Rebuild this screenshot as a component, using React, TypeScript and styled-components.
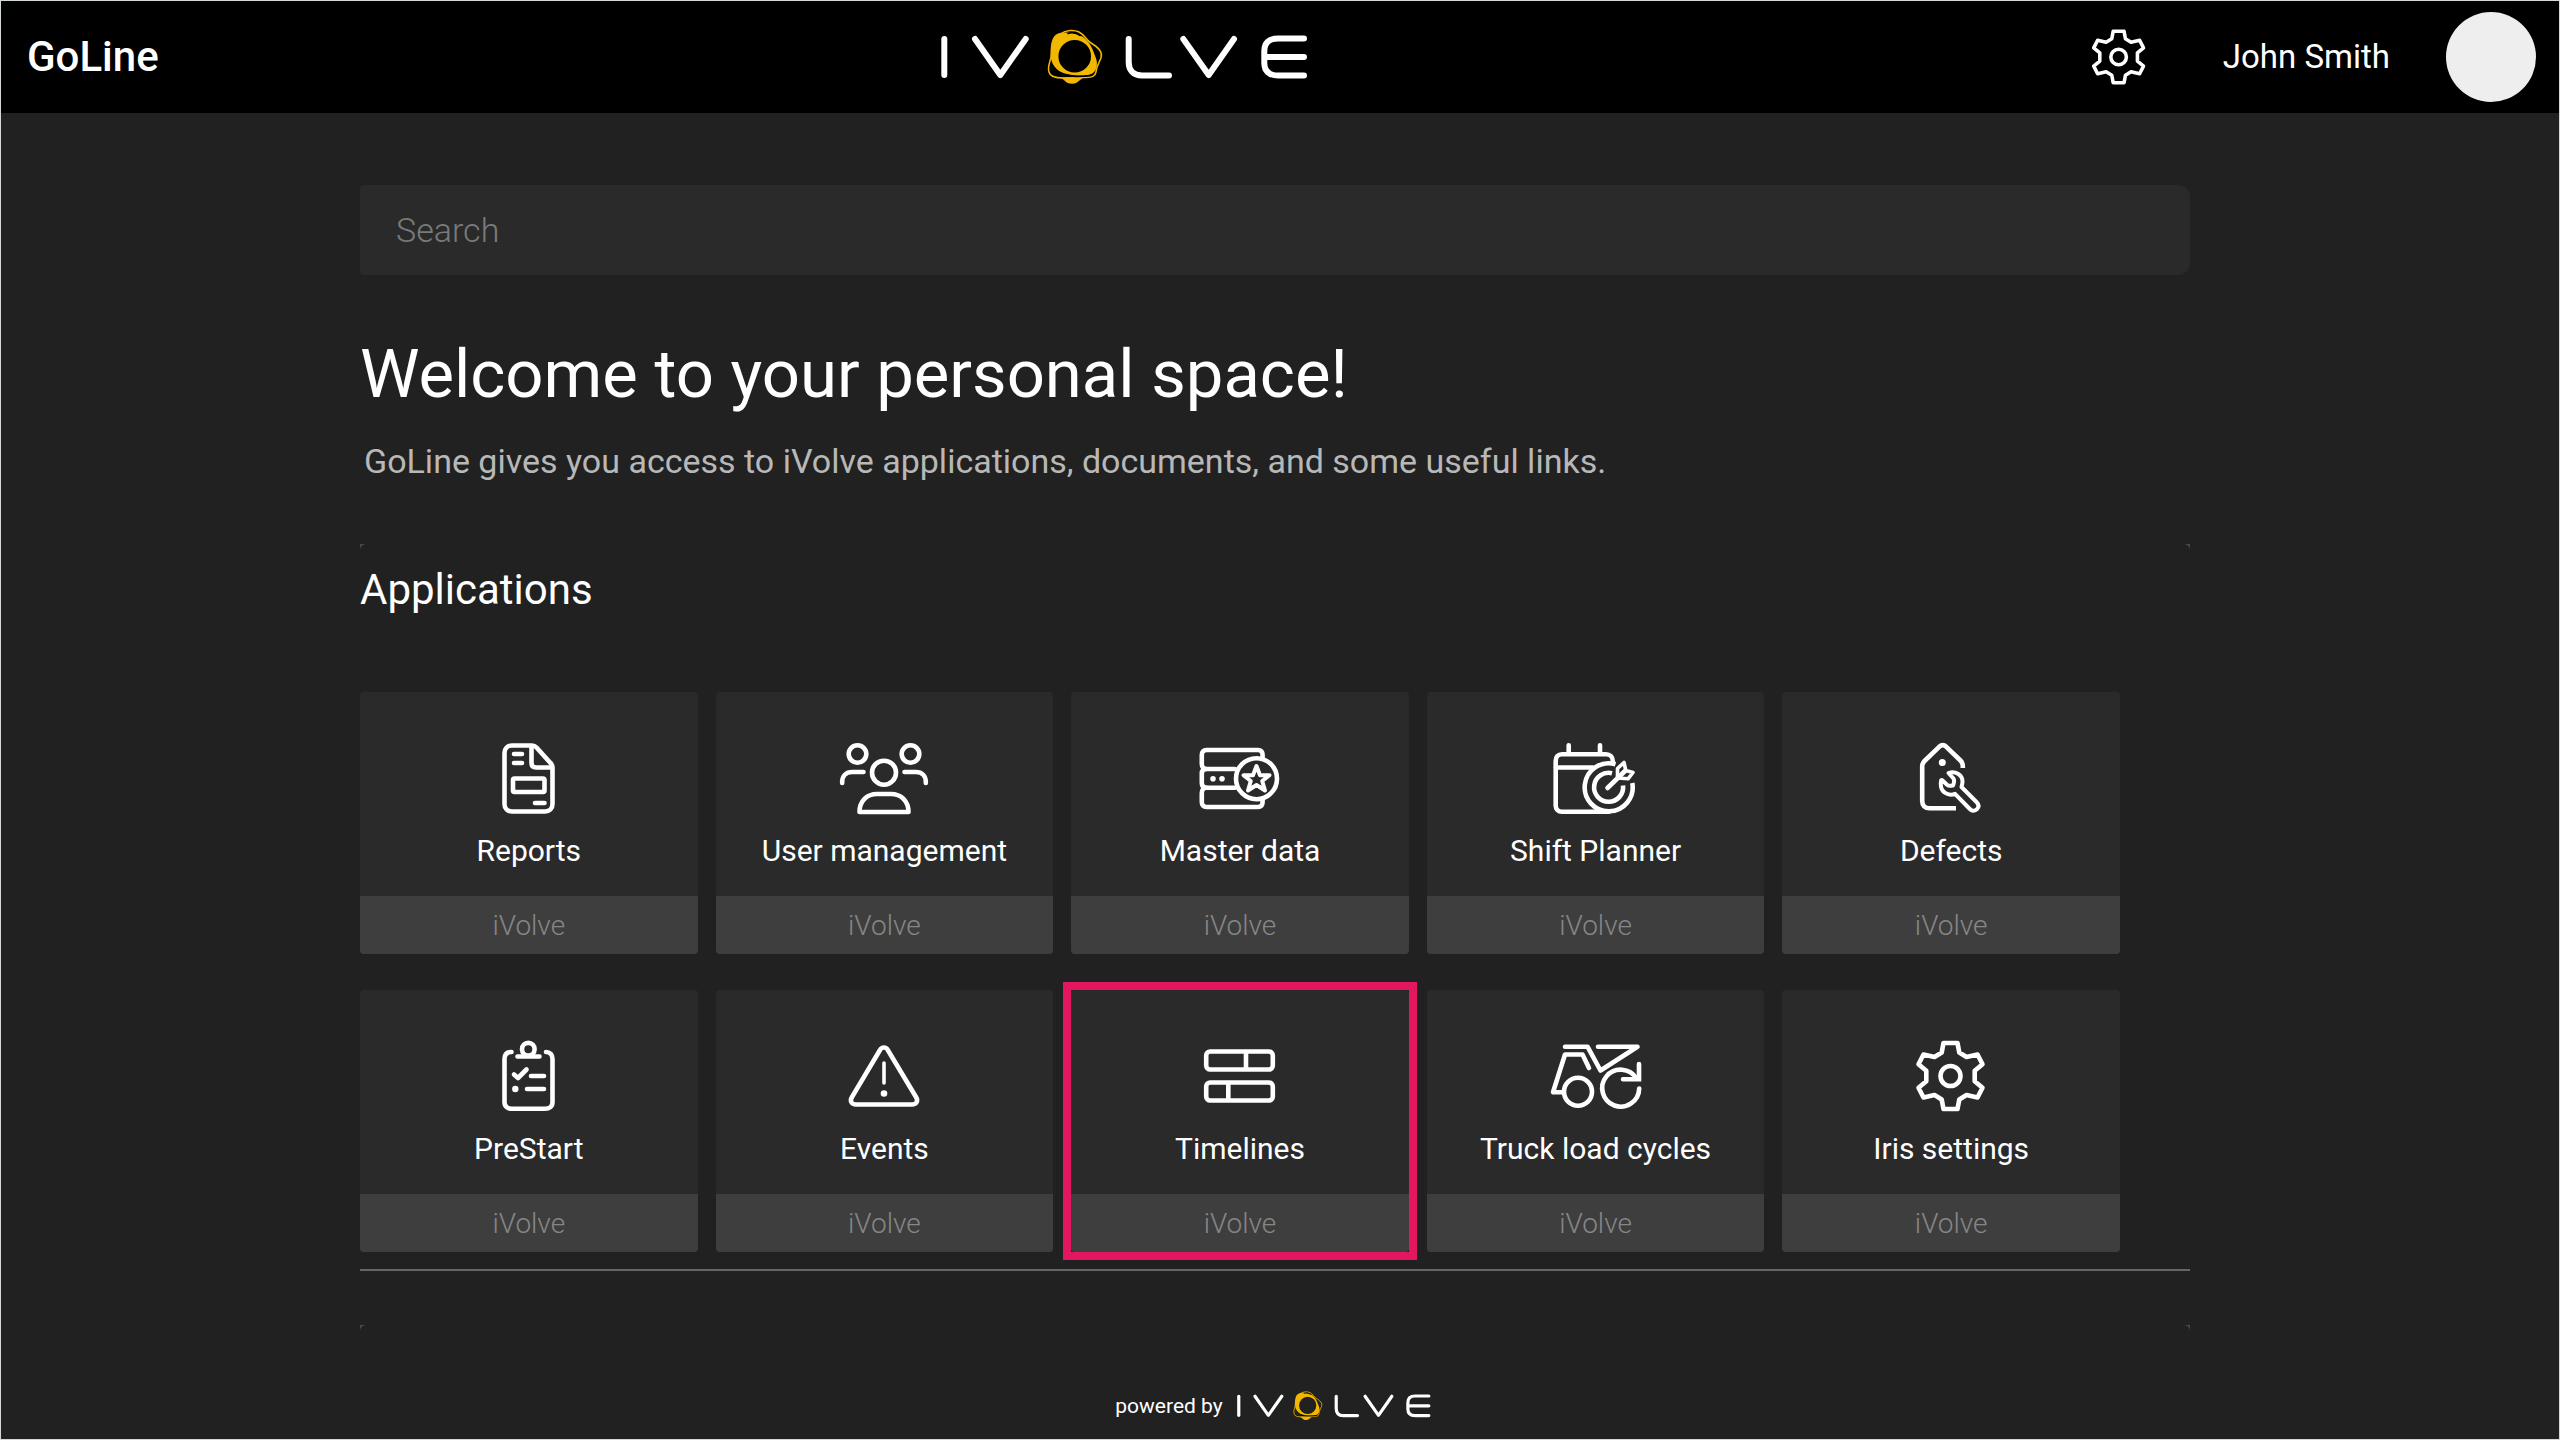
import React from "react";
import styled, { createGlobalStyle } from "styled-components";

const GlobalStyle = createGlobalStyle`
  *, *::before, *::after { box-sizing: border-box; }
  body {
    margin: 0;
    background: #212121;
    color: #fff;
    font-family: Roboto, "Open Sans", "Liberation Sans", sans-serif;
  }
  h1, h2, p { margin: 0; font-weight: 400; }
  button { font: inherit; color: inherit; border: 0; padding: 0; background: none; cursor: pointer; }
  svg { display: block; }
`;

const Page = styled.div`
  display: flex;
  flex-direction: column;
  min-height: 100vh;
  border: 1px solid #d3d8da;
`;

const Header = styled.header`
  display: flex;
  align-items: center;
  justify-content: space-between;
  height: 112px;
  padding: 0 23px 0 26px;
  background: #000;
`;

const Brand = styled.a`
  color: #fff;
  font-size: 42px;
  font-weight: 500;
  line-height: 56px;
  text-decoration: none;
`;

const UserArea = styled.div`
  display: flex;
  align-items: center;
  gap: 56px;
`;

const GearButton = styled.button`
  margin-right: 20px;
`;

const UserName = styled.span`
  font-size: 33px;
  line-height: 48px;
`;

const Avatar = styled.button`
  && {
    width: 90px;
    height: 90px;
    border-radius: 50%;
    background: #eee;
  }
`;

const Main = styled.main`
  flex: 1;
  width: 100%;
  padding: 72px 10px 0 0;
`;

const Content = styled.div`
  width: 100%;
  max-width: 1830px;
  margin: 0 auto;
`;

const SearchInput = styled.input`
  display: block;
  width: 100%;
  height: 90px;
  padding: 0 36px;
  border: 0;
  border-radius: 4px 12px 12px 4px;
  background: #2a2a2a;
  color: #fff;
  font-family: inherit;
  font-size: 34px;
  font-weight: 300;
  outline: none;
  &::placeholder { color: #7a7a7a; opacity: 1; }
`;

const Title = styled.h1`
  margin-top: 53px;
  font-size: 67px;
  line-height: 92px;
`;

const Subtitle = styled.p`
  margin-top: 17px;
  padding-left: 4px;
  color: #b8b8b8;
  font-size: 34px;
  line-height: 48px;
`;

const Section = styled.section`
  background: #4a4a4a;
  margin-top: 59px;
  & + & { margin-top: 54px; }
`;

const SectionBody = styled.div`
  min-height: 40px;
  border-radius: 6px 6px 0 0;
  background: #212121;
`;

const SectionTitle = styled.h2`
  padding-top: 18px;
  font-size: 42px;
  line-height: 56px;
`;

const CardGrid = styled.div`
  display: grid;
  grid-template-columns: repeat(5, 1fr);
  gap: 36px 18px;
  margin-top: 74px;
  padding: 0 70px 17px 0;
`;

const Divider = styled.hr`
  height: 2px;
  margin: 0;
  border: 0;
  background: #666;
`;

const Card = styled.button<{ $highlighted?: boolean }>`
  position: relative;
  display: flex;
  flex-direction: column;
  align-items: stretch;
  && { border-radius: 4px; background: #2a2a2a; }
  ${(p) =>
    p.$highlighted &&
    `&::after {
      content: "";
      position: absolute;
      inset: -8px;
      border: 8px solid #e21760;
    }`}
`;

const CardFace = styled.span`
  display: flex;
  flex-direction: column;
  align-items: center;
  height: 204px;
  padding-top: 38px;
`;

const CardLabel = styled.span`
  font-size: 30px;
  line-height: 50px;
`;

const CardVendor = styled.span`
  height: 58px;
  border-radius: 0 0 4px 4px;
  background: #3e3e3e;
  color: #868686;
  font-size: 28px;
  font-weight: 300;
  line-height: 60px;
  text-align: center;
`;

const Footer = styled.footer`
  display: flex;
  align-items: center;
  justify-content: center;
  gap: 14px;
  height: 66px;
  padding-right: 14px;
  font-size: 21px;
  line-height: 32px;
`;

const GEAR =
  "M40.5 15H54.5L56.3 24.5L63.5 29L74.5 26.5L79.5 36.2L71.7 42.7V53.3L79.5 59.8L74.5 69.5L63.5 67L56.3 71.5L54.5 81H40.5L38.7 71.5L31.5 67L20.5 69.5L15.5 59.8L23.3 53.3V42.7L15.5 36.2L20.5 26.5L31.5 29L38.7 24.5Z";

const Gear = () => (
  <>
    <path d={GEAR} />
    <circle cx="47.5" cy="48" r="10" />
  </>
);

const Icon = ({ children, size = 96, box = "0 0 96 96" }: { children: React.ReactNode; size?: number; box?: string }) => (
  <svg width={size} height={size} viewBox={box} fill="none" stroke="#fff" strokeWidth="4.6" strokeLinecap="round" strokeLinejoin="round" aria-hidden="true">
    {children}
  </svg>
);

const Logo = ({ width }: { width: number }) => (
  <svg width={width} viewBox="0 0 367 56" fill="none" stroke="#fff" strokeWidth="6" strokeLinecap="round" strokeLinejoin="round" role="img" aria-label="iVolve">
    <path d="M3.3 10V46" />
    <path d="M34 10L59.3 46L84.7 10" />
    <path d="M187.7 10V33C187.7 41 192 46.5 201 46.5H228" />
    <path d="M242.3 10L267.7 46L293 10" />
    <path d="M363 9.5H337C328 9.5 323.3 14 323.3 22V34C323.3 42 328 46.5 337 46.5H363M324 28H363" />
    <g stroke="none" fill="#f2b800">
      <path fillRule="evenodd" d="M109.5 26C109.5 16 110.5 7 117 4.500C123 3 133 2.500 142 8C149 13 152 20 155.500 31C157 38 154.500 44 149 45.500C141 47.500 127 46.500 120 43C113 39 110 33 109.500 26ZM117.400 27.300A16.300 16.300 0 1 0 150 27.300A16.300 16.300 0 1 0 117.400 27.300Z" />
      <path d="M119 48.500C124 50.500 124 54.700 131 54.700C138 54.700 138 50 144 48Z" />
    </g>
    <path strokeWidth="1.500" stroke="#f2b800" d="M119 5C125 1 133 0.500 138 3C144 6 145 11 150 14C157 18 162 23 160 29C158 34 155.500 37 155 43C154 48 151 48 144 48.500L122 49C115 49 109 48 108 43C106 37 110 32 110.500 25" />
    <path strokeWidth="1.500" stroke="#000" d="M127 4.500C131 3.200 136 4.200 139 6.500M121 45.800C129 48 140 47.800 150 46.500" />
  </svg>
);

const APPS: { name: string; highlighted?: boolean; icon: React.ReactNode }[] = [
  {
    name: "Reports",
    icon: (
      <>
        <path d="M51 15.500H31C26.500 15.500 23.500 18.500 23.500 23V74C23.500 78.500 26.500 81.500 31 81.500H64C68.500 81.500 71.500 78.500 71.500 74V38C71.500 36 71 34.500 69.500 33L55.500 17.500C54.300 16.200 52.800 15.500 51 15.500Z" />
        <path d="M50.500 16V33C50.500 36 52 37.500 55 37.500H71" />
        <path d="M33 24H41M33 33H41M54 73H63.500" />
        <rect x="32" y="48.500" width="31.500" height="13.500" rx="1.500" />
      </>
    ),
  },
  {
    name: "User management",
    icon: (
      <>
        <circle cx="21.500" cy="24" r="8.800" />
        <circle cx="74.500" cy="24" r="8.800" />
        <circle cx="48" cy="42.700" r="12" />
        <path d="M23.500 82C23.500 71 31 64 41 64H55C65 64 72.500 71 72.500 82Z" />
        <path d="M6.200 53V52C6.200 46 10 42 16 42H27.500M68.500 42H80C86 42 89.800 46 89.800 52V53" />
      </>
    ),
  },
  {
    name: "Master data",
    icon: (
      <>
        <path d="M43 39H14.500C11.500 39 9.800 37 9.800 34V25C9.800 22 11.500 20 14.500 20H66C69 20 70.600 22 70.600 25V27" />
        <path d="M43 57.700H14.500C11.500 57.700 9.800 56 9.800 53V43.500C9.800 40.500 11.500 39 14.500 39" />
        <path d="M14.500 57.700C11.500 57.700 9.800 60 9.800 63V72C9.800 75 11.500 77 14.500 77H66C69 77 70.600 75 70.600 72V70" />
        <circle cx="64.500" cy="48.700" r="20.500" />
        <path strokeWidth="4" d="M64.500 36L68 45.200H77.500L70.200 51L73 60.500L64.500 55L56 60.500L58.800 51L51.500 45.200H61Z" />
        <g fill="#fff" stroke="none">
          <circle cx="21" cy="48.700" r="2.800" />
          <circle cx="30" cy="48.700" r="2.800" />
        </g>
      </>
    ),
  },
  {
    name: "Shift Planner",
    icon: (
      <>
        <path d="M61 81.800H14C10 81.800 7.700 79 7.700 75.500V31C7.700 27 10 24.300 14 24.300H58C62 24.300 64.800 27 64.800 31V32" />
        <path d="M8 37.500H45M20.700 15.200V23M52 15.200V23" />
        <path strokeLinecap="butt" d="M67.500 34.300A24 24 0 1 0 84.300 53" />
        <path strokeLinecap="butt" d="M64 43.200A14.500 14.500 0 1 0 75 55.500" />
        <path d="M59.500 58L77 41" />
        <path strokeWidth="3.600" d="M69.500 48V38.500L76 32.500L77.800 40.500L85 42.500L80 48.800Z" />
      </>
    ),
  },
  {
    name: "Defects",
    icon: (
      <>
        <path strokeLinecap="butt" d="M59.800 38V36C59.800 33.500 59 32 57.500 30.500L43.300 16.800C41 14.700 38.500 14.700 36.200 16.800L21.500 31C19.800 32.700 19.200 34 19.200 36V71C19.200 75.500 22 78.300 26.500 78.300H53" />
        <circle cx="39.300" cy="32.500" r="3.500" fill="#fff" stroke="none" />
        <path strokeWidth="4" d="M45.500 43C52 40.500 59.500 44.500 59.500 51.500C59.500 53.500 59 55 58.500 57L73.500 72C76 74.500 76 77 74 79.200C72 81.200 69 81.200 66.800 79L52 63.800C45 66.500 37.500 62 37.800 54C37.800 52 38 49.500 39 50L44 54.800C46 56.500 47.500 56 50 55.500C51 53 52 51 50.500 48.500Z" />
      </>
    ),
  },
  {
    name: "PreStart",
    icon: (
      <>
        <path d="M30.500 24C26 24 23.500 26.500 23.500 31V74C23.500 78.500 26.500 80.800 31 80.800H64C68.500 80.800 71.500 78.500 71.500 74V31C71.500 26.500 69 24 65 24" />
        <circle cx="47.300" cy="21.200" r="6.300" />
        <path d="M36.500 28.500H58.500M33 46.500L37 50L45.500 41.500M50 48H63M46 61H63" />
        <circle cx="34.300" cy="61" r="3.200" fill="#fff" stroke="none" />
      </>
    ),
  },
  {
    name: "Events",
    icon: (
      <>
        <path d="M44 22C45.800 18.700 50 18.700 51.800 22L80 69C82.500 73 80.500 76.500 76 76.500H20C15.500 76.500 13.500 73 16 69Z" />
        <path strokeWidth="3.600" d="M48 35V55" />
        <circle cx="48" cy="65.500" r="3.300" fill="#fff" stroke="none" />
      </>
    ),
  },
  {
    name: "Timelines",
    highlighted: true,
    icon: (
      <>
        <rect x="14.200" y="23.500" width="66.600" height="18" rx="4" />
        <rect x="14.200" y="54.500" width="66.600" height="18" rx="4" />
        <path d="M54 24V41M36.300 55V72" />
      </>
    ),
  },
  {
    name: "Truck load cycles",
    icon: (
      <>
        <path d="M17 18.700H39.500L52.500 42.500L89.500 18.700H50" />
        <path d="M41 40L34.500 26.500H17L5 64.300H14.500" />
        <circle cx="30" cy="63.700" r="14" />
        <path d="M91.200 60.500A18.500 18.500 0 1 1 88.500 50.500" />
        <path strokeLinejoin="miter" d="M91 36V51.300H75" />
      </>
    ),
  },
  { name: "Iris settings", icon: <Gear /> },
];

export default function App() {
  return (
    <Page>
      <GlobalStyle />
      <Header>
        <Brand href="#">GoLine</Brand>
        <Logo width={367} />
        <UserArea>
          <GearButton aria-label="Settings">
            <Icon size={56} box="12 12 72 72">
              <Gear />
            </Icon>
          </GearButton>
          <UserName>John Smith</UserName>
          <Avatar aria-label="Account" />
        </UserArea>
      </Header>
      <Main>
        <Content>
          <SearchInput type="text" placeholder="Search" aria-label="Search" />
          <Title>Welcome to your personal space!</Title>
          <Subtitle>GoLine gives you access to iVolve applications, documents, and some useful links.</Subtitle>
          <Section>
            <SectionBody>
              <SectionTitle>Applications</SectionTitle>
              <CardGrid>
                {APPS.map((app) => (
                  <Card key={app.name} $highlighted={app.highlighted}>
                    <CardFace>
                      <Icon>{app.icon}</Icon>
                      <CardLabel>{app.name}</CardLabel>
                    </CardFace>
                    <CardVendor>iVolve</CardVendor>
                  </Card>
                ))}
              </CardGrid>
              <Divider />
            </SectionBody>
          </Section>
          <Section>
            <SectionBody />
          </Section>
        </Content>
      </Main>
      <Footer>
        <span>powered by</span>
        <Logo width={194} />
      </Footer>
    </Page>
  );
}
